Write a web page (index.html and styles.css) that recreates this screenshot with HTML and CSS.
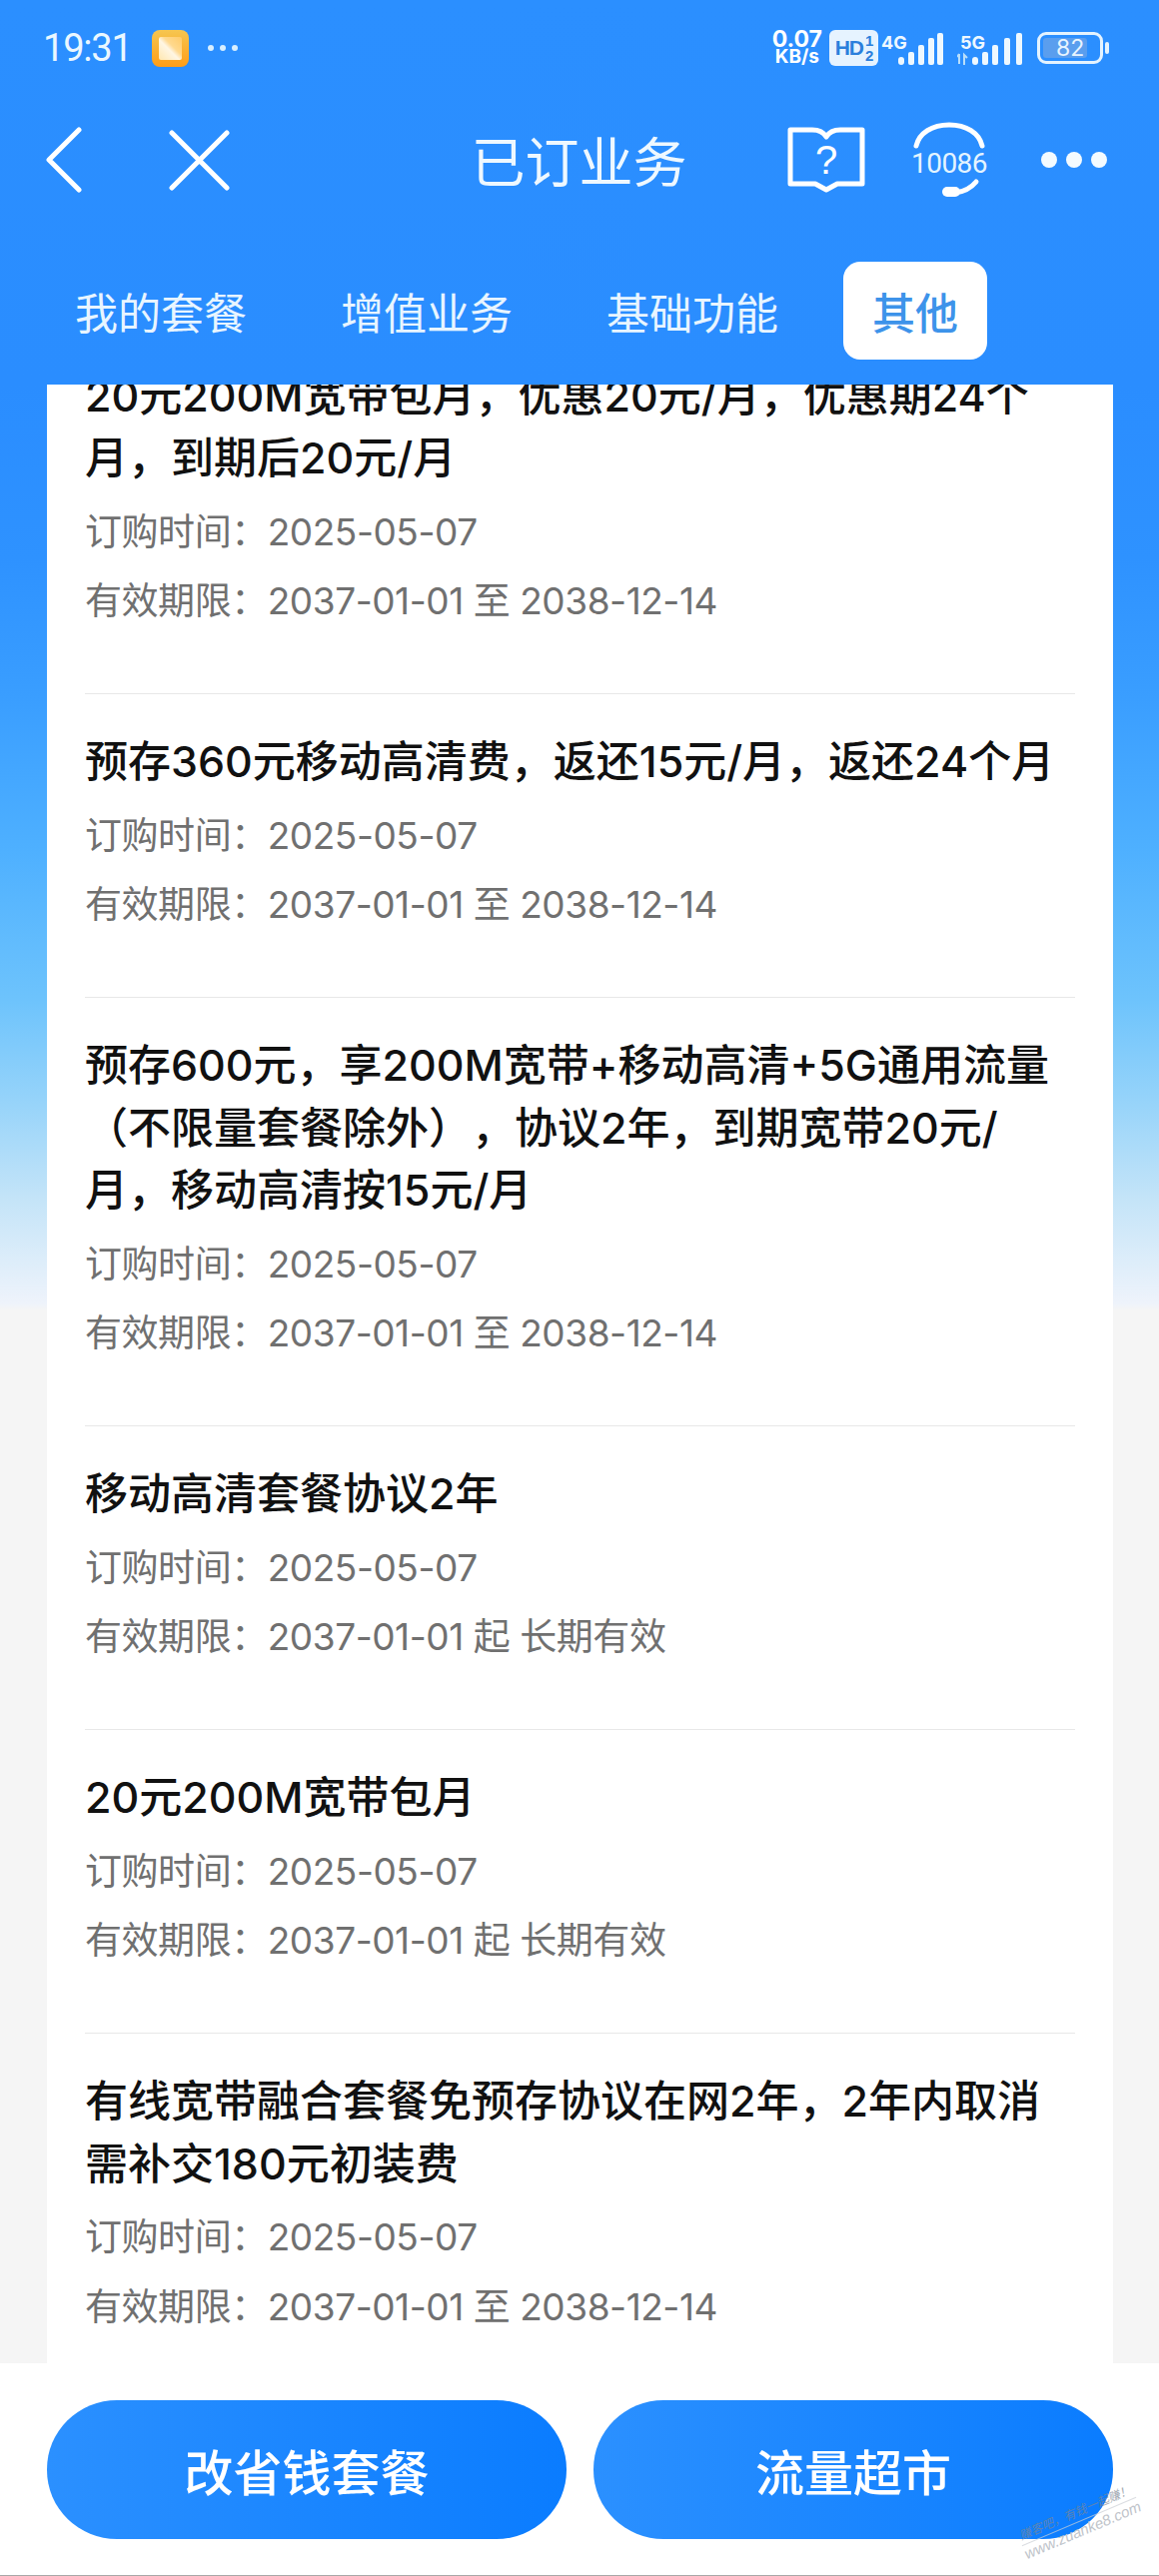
FILE: index.html
```html
<!DOCTYPE html>
<html lang="zh-CN">

<head>
	<meta charset="UTF-8">
	<meta name="viewport" content="width=device-width, initial-scale=1.0">
	<title>已订业务</title>
	<link rel="stylesheet" href="styles.css">
</head>

<body>
	<div class="page">
		<header class="top">
			<div class="status">
				<div class="status-left">
					<span class="clock">19:31</span>
					<svg class="app-icon" width="37" height="37" viewBox="0 0 37 37">
						<defs>
							<linearGradient id="appBg" x1="0" y1="0" x2="0" y2="1">
								<stop offset="0" stop-color="#f6c650" />
								<stop offset="1" stop-color="#ff9d17" />
							</linearGradient>
							<linearGradient id="appIn" x1="0" y1="1" x2="1" y2="0">
								<stop offset="0" stop-color="#ffe7b0" />
								<stop offset="0.45" stop-color="#fff6e4" />
								<stop offset="0.6" stop-color="#ffd98e" />
								<stop offset="1" stop-color="#ffcb68" />
							</linearGradient>
						</defs>
						<rect width="37" height="37" rx="8" fill="url(#appBg)" />
						<rect x="7" y="7" width="23" height="23" rx="2" fill="url(#appIn)" />
					</svg>
					<span class="status-dots"><i></i><i></i><i></i></span>
				</div>
				<div class="status-right">
					<span class="speed"><b>0.07</b><b>KB/s</b></span>
					<span class="hd">HD<span class="hd-num"><b>1</b><b>2</b></span></span>
					<svg class="signal" width="62" height="36" viewBox="0 0 62 36">
						<text x="0" y="19" class="net">4G</text>
						<rect x="17" y="27" width="6" height="8" rx="3" />
						<rect x="27" y="22" width="6" height="13" rx="2" />
						<rect x="37" y="15" width="6" height="20" rx="2" />
						<rect x="47" y="8" width="6" height="27" rx="2" />
						<rect x="56" y="3" width="6" height="32" rx="2" />
					</svg>
					<svg class="signal" width="66" height="36" viewBox="0 0 66 36">
						<text x="3" y="19" class="net">5G</text>
						<path class="updown" d="M2 24v10M0 27l2-3M7 35V25l3 3" />
						<rect x="15" y="27" width="6" height="8" rx="3" />
						<rect x="25" y="22" width="6" height="13" rx="2" />
						<rect x="35" y="15" width="6" height="20" rx="2" />
						<rect x="47" y="8" width="6" height="27" rx="2" />
						<rect x="59" y="3" width="6" height="32" rx="2" />
					</svg>
					<span class="battery"><span class="battery-fill">82</span></span>
					<i class="battery-nub"></i>
				</div>
			</div>

			<nav class="nav">
				<div class="nav-left">
					<svg width="37" height="66" viewBox="0 0 37 66" class="nav-icon">
						<path d="M34 3 4 33l30 30" />
					</svg>
					<svg width="61" height="61" viewBox="0 0 61 61" class="nav-icon">
						<path d="M3 3l55 55M58 3 3 58" />
					</svg>
				</div>
				<h1 class="title">已订业务</h1>
				<div class="nav-right">
					<svg width="78" height="66" viewBox="0 0 78 66" class="book">
						<path d="M3 3h22c6 0 11 2 14 7 3-5 8-7 14-7h22v54H50l-11 6-11-6H3z" />
						<text x="39" y="47" class="book-mark">?</text>
					</svg>
					<svg width="78" height="76" viewBox="0 0 78 76" class="headset">
						<path d="M6 24C9 11 22 3 39 3s30 8 33 21" />
						<path d="M66 60c-5 6-12 10-21 11" />
						<rect x="32" y="65" width="18" height="10" rx="5" class="fill" />
						<text x="39" y="51" class="hotline">10086</text>
					</svg>
					<span class="more"><i></i><i></i><i></i></span>
				</div>
			</nav>

			<div class="tabs">
				<a class="tab">我的套餐</a>
				<a class="tab">增值业务</a>
				<a class="tab">基础功能</a>
				<a class="tab tab-on">其他</a>
			</div>
		</header>

		<main class="card">
			<div class="list">
				<section class="item">
					<h3>20元200M宽带包月，优惠20元/月，优惠期24个月，到期后20元/月</h3>
					<p>订购时间：2025-05-07</p>
					<p>有效期限：2037-01-01 至 2038-12-14</p>
				</section>
				<section class="item">
					<h3>预存360元移动高清费，返还15元/月，返还24个月</h3>
					<p>订购时间：2025-05-07</p>
					<p>有效期限：2037-01-01 至 2038-12-14</p>
				</section>
				<section class="item">
					<h3>预存600元，享200M宽带+移动高清+5G通用流量（不限量套餐除外），协议2年，到期宽带20元/月，移动高清按15元/月</h3>
					<p>订购时间：2025-05-07</p>
					<p>有效期限：2037-01-01 至 2038-12-14</p>
				</section>
				<section class="item">
					<h3>移动高清套餐协议2年</h3>
					<p>订购时间：2025-05-07</p>
					<p>有效期限：2037-01-01 起 长期有效</p>
				</section>
				<section class="item">
					<h3>20元200M宽带包月</h3>
					<p>订购时间：2025-05-07</p>
					<p>有效期限：2037-01-01 起 长期有效</p>
				</section>
				<section class="item">
					<h3>有线宽带融合套餐免预存协议在网2年，2年内取消需补交180元初装费</h3>
					<p>订购时间：2025-05-07</p>
					<p>有效期限：2037-01-01 至 2038-12-14</p>
				</section>
			</div>
		</main>

		<footer class="bar">
			<button class="btn" type="button">改省钱套餐</button>
			<button class="btn" type="button">流量超市</button>
		</footer>
		<div class="mark">
			<span class="mark-top">赚客吧，有钱一起赚！</span>
			<span>www.zuanke8.com</span>
		</div>
	</div>
</body>

</html>
```

FILE: styles.css
```css
* {
	box-sizing: border-box;
}

body {
	margin: 0;
	font-family: "Noto Sans CJK SC", "Noto Sans", sans-serif;
}

.page {
	position: relative;
	display: flex;
	flex-direction: column;
	width: 1160px;
	height: 2579px;
	overflow: hidden;
	background: linear-gradient(180deg, #2b8fff 0, #2a8dff 385px, #2e92ff 560px, #3a9eff 700px, #4eb0ff 850px, #6dc3fc 1000px, #95d3fa 1100px, #c4e4f8 1200px, #eef3fb 1305px, #f5f5f5 1312px);
}

.top {
	height: 385px;
	flex: none;
	color: #fff;
}

/* status bar */
.status {
	display: flex;
	justify-content: space-between;
	align-items: center;
	height: 60px;
	margin-top: 18px;
	padding: 0 50px 0 43px;
}

.status-left,
.status-right {
	display: flex;
	align-items: center;
}

.clock {
	font-family: Roboto, sans-serif;
	font-size: 38px;
	letter-spacing: -1.2px;
	color: #eaf7ff;
	margin-right: 20px;
}

.status-dots {
	display: flex;
	gap: 6px;
	margin-left: 19px;
}

.status-dots i {
	width: 6px;
	height: 6px;
	border-radius: 50%;
	background: #d8efff;
}

.speed {
	display: flex;
	flex-direction: column;
	align-items: center;
	font-family: Inter, "Liberation Sans", sans-serif;
	line-height: 17px;
	margin-right: 7px;
}

.speed b:first-child {
	font-size: 23px;
}

.speed b:last-child {
	font-size: 19px;
}

.hd {
	display: flex;
	align-items: center;
	justify-content: center;
	width: 49px;
	height: 36px;
	border-radius: 6px;
	background: #e6f3ff;
	color: #2b7fdc;
	font-family: "Liberation Sans", sans-serif;
	font-size: 21px;
	font-weight: 700;
	letter-spacing: -1px;
	margin-right: 3px;
}

.hd-num {
	display: flex;
	flex-direction: column;
	font-size: 15px;
	line-height: 15px;
	margin-left: 2px;
}

.signal {
	margin-right: 14px;
	flex: none;
}

.signal rect {
	fill: #eef8ff;
}

.net {
	font-family: Inter, "Liberation Sans", sans-serif;
	font-size: 18px;
	font-weight: 700;
	fill: #eef8ff;
}

.updown {
	fill: none;
	stroke: #b8defa;
	stroke-width: 2;
}

.battery {
	display: block;
	width: 66px;
	height: 32px;
	padding: 3px;
	border: 3px solid #e4f3ff;
	border-radius: 9px;
}

.battery-fill {
	display: block;
	width: 82%;
	height: 100%;
	border-radius: 3px;
	background: #5a9eee;
	font-family: Inter, "Liberation Sans", sans-serif;
	font-size: 23px;
	line-height: 20px;
	text-align: center;
	padding-left: 10px;
	color: #e8f4ff;
}

.battery-nub {
	width: 4px;
	height: 12px;
	margin-left: 2px;
	border-radius: 2px;
	background: #e4f3ff;
}

/* nav row */
.nav {
	display: flex;
	align-items: center;
	justify-content: space-between;
	height: 90px;
	margin-top: 37px;
	padding: 0 52px 0 45px;
}

.nav-left,
.nav-right {
	display: flex;
	align-items: center;
}

.nav-left {
	gap: 87px;
}

.nav-icon {
	fill: none;
	stroke: #fff;
	stroke-width: 5;
	stroke-linecap: round;
	stroke-linejoin: round;
}

.title {
	margin: 0 0 0 141px;
	font-size: 54px;
	font-weight: 400;
	line-height: 90px;
	color: #eef8ff;
}

.nav-right {
	gap: 46px;
}

.book {
	fill: none;
	stroke: #fff;
	stroke-width: 5;
	stroke-linejoin: round;
}

.book-mark {
	font-family: "Liberation Sans", sans-serif;
	font-size: 40px;
	fill: #fff;
	stroke: none;
	text-anchor: middle;
}

.headset {
	fill: none;
	stroke: #fff;
	stroke-width: 5;
	stroke-linecap: round;
	margin-left: -1px;
}

.headset .fill {
	fill: #fff;
	stroke: none;
}

.hotline {
	font-family: Roboto, sans-serif;
	font-size: 28px;
	fill: #e4f4ff;
	stroke: none;
	text-anchor: middle;
	letter-spacing: -0.5px;
}

.more {
	display: flex;
	gap: 9px;
	margin-left: 7px;
}

.more i {
	width: 16px;
	height: 16px;
	border-radius: 50%;
	background: #f4fbff;
}

/* tabs */
.tabs {
	display: flex;
	gap: 36px;
	margin-top: 57px;
	padding-left: 46px;
}

.tab {
	height: 98px;
	padding: 0 29px;
	font-size: 43px;
	line-height: 98px;
	color: #e8f5ff;
	border-radius: 17px;
}

.tab-on {
	background: #fff;
	color: #3d93ea;
	font-weight: 500;
}

/* list */
.card {
	flex: 1;
	min-height: 0;
	margin: 0 46px 0 47px;
	padding: 0 38px;
	overflow: hidden;
	background: #fff;
}

.list {
	margin-top: -56.5px;
}

.item {
	padding: 36px 12px 57.5px 0;
	font-family: Inter, "Noto Sans CJK SC", sans-serif;
	text-spacing-trim: space-all;
	border-bottom: 1px solid #e8e8e8;
}

.item:last-child {
	border-bottom: 0;
}

.item h3 {
	margin: 0 0 8px;
	font-size: 43px;
	font-weight: 500;
	line-height: 62.5px;
	color: #111;
}

.item p {
	margin: 0;
	font-size: 37px;
	letter-spacing: -0.45px;
	line-height: 69.5px;
	color: #707070;
}

/* bottom buttons */
.bar {
	display: flex;
	flex: none;
	justify-content: space-between;
	height: 213px;
	padding: 37px 46px 0 47px;
	background: #fff;
	border-bottom: 1px solid #a8a8a8;
}

.btn {
	width: 520px;
	height: 139px;
	border: 0;
	border-radius: 70px / 69px;
	background: linear-gradient(90deg, #2b90ff, #0a7cff);
	color: #fff;
	font-family: inherit;
	font-size: 49px;
	font-weight: 500;
}

/* forum watermark over the corner */
.mark {
	position: absolute;
	left: 1018px;
	top: 2506px;
	display: flex;
	flex-direction: column;
	align-items: center;
	width: 124px;
	font-family: "Liberation Sans", "Noto Sans CJK SC", sans-serif;
	font-size: 15px;
	line-height: 18px;
	font-style: italic;
	color: #c0c4ca;
	transform: rotate(-23deg);
}

.mark-top {
	width: 100%;
	font-size: 12px;
	text-align: center;
	color: #7d8794;
	border-bottom: 1px solid #ccd0d6;
	opacity: 0.7;
}
```
